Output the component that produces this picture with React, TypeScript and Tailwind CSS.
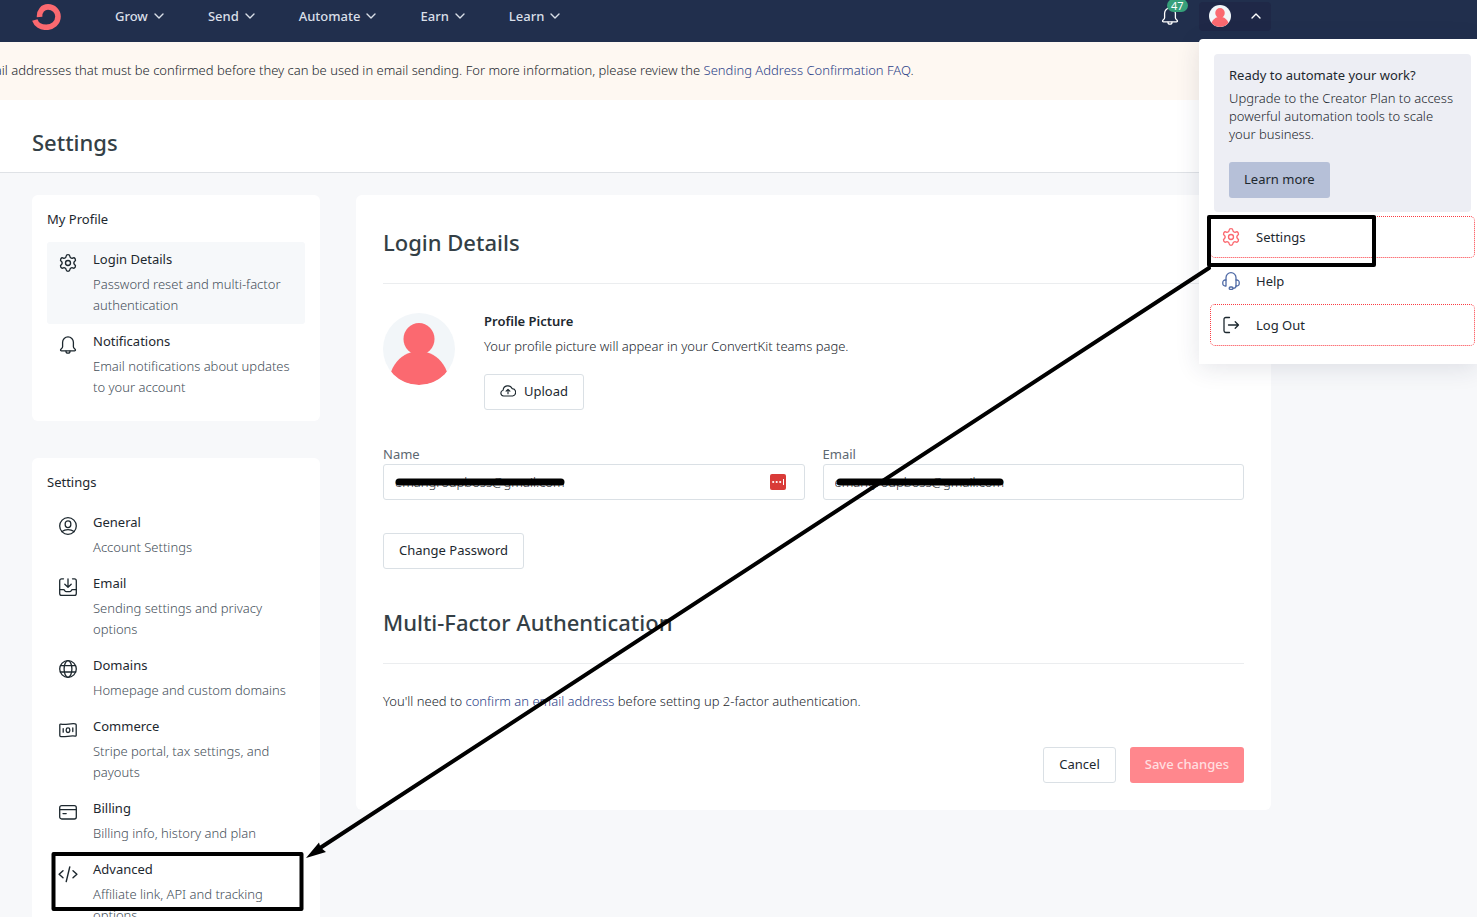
import { ReactNode } from "react";
import { Settings as GearIcon } from "lucide-react";

type MenuItem = {
  title: string;
  description: string;
  icon: ReactNode;
  active?: boolean;
};

const Icon = ({
  children,
  className = "h-[18px] w-[18px]",
}: {
  children: ReactNode;
  className?: string;
}) => (
  <svg
    viewBox="0 0 18 18"
    fill="none"
    stroke="currentColor"
    strokeWidth="1.3"
    strokeLinecap="round"
    strokeLinejoin="round"
    className={`shrink-0 ${className}`}
    aria-hidden="true"
  >
    {children}
  </svg>
);

const Gear = () => (
  <GearIcon className="-m-px h-5 w-5 shrink-0" strokeWidth={1.6} />
);

const BellIcon = () => (
  <Icon>
    <path d="M9 .9a5.4 5.4 0 0 1 5.4 5.4v4.4c0 1.9 2.1 2.1 2.1 3.3 0 .5-.4.8-.9.8H2.4c-.5 0-.9-.3-.9-.8 0-1.2 2.1-1.4 2.1-3.3V6.3A5.4 5.4 0 0 1 9 .9z" />
    <path d="M7 15.2a2 2 0 0 0 4 0" />
  </Icon>
);

const ChevronIcon = ({ up }: { up?: boolean }) => (
  <svg
    viewBox="0 0 10 6"
    fill="none"
    stroke="currentColor"
    strokeWidth="1.4"
    strokeLinecap="round"
    strokeLinejoin="round"
    className={`h-1.5 w-2.5 ${up ? "rotate-180" : ""}`}
    aria-hidden="true"
  >
    <path d="M1 1l4 4 4-4" />
  </svg>
);

const Avatar = ({ className }: { className: string }) => (
  <svg
    viewBox="0 0 72 72"
    className={`shrink-0 rounded-full bg-[#f2f6f9] ${className}`}
    role="img"
    aria-label="Profile picture"
  >
    <g fill="#fb6970">
      <ellipse cx="36" cy="26" rx="15.5" ry="16" />
      <path d="M8 59C12 48 19 42 29 39h14c10 3 17 9 21 20C57 68 47 72 36 72S15 68 8 59z" />
    </g>
  </svg>
);

const navLinks = ["Grow", "Send", "Automate", "Earn", "Learn"];

const profileItems: MenuItem[] = [
  {
    title: "Login Details",
    description: "Password reset and multi-factor authentication",
    icon: <Gear />,
    active: true,
  },
  {
    title: "Notifications",
    description: "Email notifications about updates to your account",
    icon: <BellIcon />,
  },
];

const settingsItems: MenuItem[] = [
  {
    title: "General",
    description: "Account Settings",
    icon: (
      <Icon>
        <circle cx="9" cy="9" r="8.3" />
        <rect x="6.2" y="3.8" width="5.6" height="6.8" rx="2.8" />
        <path d="M3 14.6c1.6-1.2 3.6-1.9 6-1.9s4.4.7 6 1.9" />
      </Icon>
    ),
  },
  {
    title: "Email",
    description: "Sending settings and privacy options",
    icon: (
      <Icon>
        <path d="M4.5.8H2.6A1.9 1.9 0 0 0 .7 2.7V15.4a1.9 1.9 0 0 0 1.9 1.9h12.8a1.9 1.9 0 0 0 1.9-1.9V2.7A1.9 1.9 0 0 0 15.4.8h-1.9" />
        <path d="M9 .8v8.4M5.8 6.2 9 9.3l3.2-3.1" />
        <path d="M.8 11.6h3.7c.8 0 1 .5 1.3 1.1.3.7.8 1 1.6 1h3.2c.8 0 1.3-.3 1.6-1 .3-.6.5-1.1 1.3-1.1h3.7" />
      </Icon>
    ),
  },
  {
    title: "Domains",
    description: "Homepage and custom domains",
    icon: (
      <Icon>
        <circle cx="9" cy="9" r="8.3" />
        <ellipse cx="9" cy="9" rx="3.9" ry="8.3" />
        <path d="M1.6 5.7h14.8M1.3 12h15.4" />
      </Icon>
    ),
  },
  {
    title: "Commerce",
    description: "Stripe portal, tax settings, and payouts",
    icon: (
      <Icon>
        <path d="M.8 4c0-.7.5-1 1.1-.9 4.8 1 9.4-.9 14.3-.3.6.1 1 .5 1 1.1v10.3c0 .6-.5 1-1.1.9-4.8-.8-9.4 1.1-14.2.5-.7-.1-1.1-.5-1.1-1.1z" />
        <rect x="7.2" y="6.9" width="3.6" height="4.6" rx="1.8" />
        <path d="M4.2 7.6v3.6M13.8 7v3.6" />
      </Icon>
    ),
  },
  {
    title: "Billing",
    description: "Billing info, history and plan",
    icon: (
      <Icon>
        <rect x=".7" y="2.7" width="16.6" height="13.3" rx="2" />
        <path d="M.8 6.6h16.4M4 10.6h3.2" />
      </Icon>
    ),
  },
  {
    title: "Advanced",
    description: "Affiliate link, API and tracking options",
    icon: (
      <Icon className="-mx-px h-5 w-5">
        <path d="M4.5 6 1 9.2l3.5 3.2M13.5 6 17 9.2l-3.5 3.2M10.6 2.6 7.4 15.8" />
      </Icon>
    ),
  },
];

const Header = () => (
  <header className="relative z-10 flex h-[42px] items-center bg-[#212f4d] pb-2.5 pl-8 text-[#d9dfe8]">
    <a href="#" aria-label="Home">
      <svg viewBox="0 0 29 28" fill="none" className="h-7 w-[29px]">
        <path
          d="M7.6 15C7.2 9 11 4.9 16 4.9c5.6 0 10 4.3 10 9.7 0 6.1-5.2 10.7-11.8 10.7-5.2 0-9.9-2.7-11.4-7.3"
          stroke="#fb6970"
          strokeWidth="5.6"
        />
      </svg>
    </a>
    <nav className="ml-[54px] flex gap-11">
      {navLinks.map((link) => (
        <button
          key={link}
          type="button"
          className="flex items-center gap-1.5 font-medium"
        >
          {link}
          <ChevronIcon />
        </button>
      ))}
    </nav>
    <button
      type="button"
      aria-label="Notifications"
      className="relative ml-auto mr-5 text-white"
    >
      <BellIcon />
      <span className="absolute -top-2 left-1.5 rounded-full bg-[#36a07a] px-1 text-[11px] font-normal leading-[13px]">
        47
      </span>
    </button>
    <div className="w-[278px]">
      <button
        type="button"
        aria-label="Account menu"
        aria-expanded="true"
        className="flex h-[29px] w-[72px] items-center justify-between rounded bg-[#1f2847] px-2.5 text-white"
      >
        <Avatar className="h-[22px] w-[22px]" />
        <ChevronIcon up />
      </button>
    </div>
    <AccountMenu />
  </header>
);

const AccountMenu = () => (
  <div className="absolute right-0 top-[39px] w-[278px] rounded-tl bg-white pb-[18px] pt-[15px] text-[#1d282f] shadow-[0_4px_24px_rgba(30,45,75,0.12)]">
    <section className="ml-[15px] mr-1.5 rounded-sm bg-[#edeef4] px-[15px] pb-3.5 pt-3">
      <h2 className="font-normal">Ready to automate your work?</h2>
      <p className="mt-[5px]">
        Upgrade to the Creator Plan to access powerful automation tools to scale
        your business.
      </p>
      <button
        type="button"
        className="mt-[19px] h-9 rounded-[3px] bg-[#b6c0d8] px-[15px] pb-0.5 font-normal"
      >
        Learn more
      </button>
    </section>
    <ul className="ml-[11px] mr-0.5 mt-1 flex flex-col gap-0.5 font-normal">
      <li>
        <a
          href="#"
          className="flex h-[42px] items-center gap-4 rounded-[5px] border border-dotted border-[#fb3b42] pl-[11px]"
        >
          <span className="text-[#fb6970]">
            <Gear />
          </span>
          Settings
        </a>
      </li>
      <li>
        <a href="#" className="flex h-[42px] items-center gap-4 pl-3">
          <span className="text-[#506ba6]">
            <Icon>
              <path d="M4 8v6h-.7A2.4 2.4 0 0 1 .8 11.7v-1.4A2.4 2.4 0 0 1 3.3 8zM14 8v6h.7a2.4 2.4 0 0 0 2.5-2.3v-1.4A2.4 2.4 0 0 0 14.7 8z" />
              <path d="M4 8V5.7a5 5 0 0 1 10 0V8M14 14c0 1.5-1 2.3-3 2.4" />
              <rect x="7.2" y="15" width="3.8" height="2.4" rx="1.2" />
            </Icon>
          </span>
          Help
        </a>
      </li>
      <li>
        <a
          href="#"
          className="flex h-[42px] items-center gap-4 rounded-[5px] border border-dotted border-[#fb3b42] pl-[11px]"
        >
          <Icon>
            <path d="M7.5 1.5H3.8A1.8 1.8 0 0 0 2 3.3v11.4a1.8 1.8 0 0 0 1.8 1.8h3.7M6.5 9h10M13.2 5.7 16.5 9l-3.3 3.3" />
          </Icon>
          Log Out
        </a>
      </li>
    </ul>
  </div>
);

const SidebarCard = ({
  title,
  items,
}: {
  title: string;
  items: MenuItem[];
}) => (
  <section className="rounded-md bg-white p-[15px]">
    <h2 className="font-normal">{title}</h2>
    <ul className="mt-3.5">
      {items.map((item) => (
        <li key={item.title}>
          <a
            href="#"
            className={`flex gap-4 rounded-[3px] px-3 py-2 ${
              item.active ? "bg-[#f6f8fa]" : ""
            }`}
          >
            <span className="mt-1 flex w-[18px] shrink-0 justify-center self-start">
              {item.icon}
            </span>
            <div>
              <h3 className="font-normal">{item.title}</h3>
              <p className="mt-1.5 leading-[21px] text-[#46505a]">
                {item.description}
              </p>
            </div>
          </a>
        </li>
      ))}
    </ul>
  </section>
);

const OutlineButton = ({ children }: { children: ReactNode }) => (
  <button
    type="button"
    className="flex h-9 items-center gap-2 rounded-[3px] border border-[#dae0e5] bg-white px-[15px] pb-0.5 font-normal"
  >
    {children}
  </button>
);

const SectionTitle = ({ children }: { children: ReactNode }) => (
  <h2 className="border-b border-[#ebedef] pb-[26px] text-[22px] font-medium leading-[30px] text-[#343f46]">
    {children}
  </h2>
);

const TextField = ({
  id,
  label,
  children,
}: {
  id: string;
  label: string;
  children?: ReactNode;
}) => (
  <div className="flex-1">
    <label htmlFor={id} className="block font-normal leading-5 text-[#5d6871]">
      {label}
    </label>
    <div className="relative">
      <input
        id={id}
        type="text"
        defaultValue="emangroupboss@gmail.com"
        className="h-9 w-full rounded-[3px] border border-[#dae0e5] px-[11px]"
      />
      {children}
    </div>
  </div>
);

const LoginDetails = () => (
  <main className="flex-1 self-start rounded-md bg-white px-[27px] pb-[27px] pt-8">
    <SectionTitle>Login Details</SectionTitle>
    <div className="mt-[29px] flex gap-[29px]">
      <Avatar className="h-[72px] w-[72px]" />
      <div>
        <h3 className="font-semibold leading-4">Profile Picture</h3>
        <p className="mb-[19px] mt-2">
          Your profile picture will appear in your ConvertKit teams page.
        </p>
        <OutlineButton>
          <Icon className="h-4 w-4">
            <path d="M5.5 14.6H4a3.3 3.3 0 0 1-.5-6.5A5.3 5.3 0 0 1 13.6 6.3a4.2 4.2 0 0 1 .7 8.3H5M9 12V7.3M6.9 9.2 9 7.2l2.1 2" />
          </Icon>
          Upload
        </OutlineButton>
      </div>
    </div>
    <div className="mb-[33px] mt-[34px] flex gap-[18px]">
      <TextField id="name" label="Name">
        <svg
          viewBox="0 0 16 16"
          className="absolute right-[19px] top-2.5 h-4 w-4"
          aria-hidden="true"
        >
          <rect width="16" height="16" rx="2" fill="#d93b38" />
          <g fill="#fff">
            <circle cx="3.2" cy="8" r="1.1" />
            <circle cx="6.7" cy="8" r="1.1" />
            <circle cx="10.2" cy="8" r="1.1" />
            <rect x="13" y="5" width="1" height="6" />
          </g>
        </svg>
      </TextField>
      <TextField id="email" label="Email" />
    </div>
    <OutlineButton>Change Password</OutlineButton>
    <div className="mt-[38px]">
      <SectionTitle>Multi-Factor Authentication</SectionTitle>
    </div>
    <p className="mt-7">
      You'll need to{" "}
      <a href="#" className="text-[#2c4388]">
        confirm an email address
      </a>{" "}
      before setting up 2-factor authentication.
    </p>
    <div className="mt-[37px] flex justify-end gap-3.5">
      <OutlineButton>Cancel</OutlineButton>
      <button
        type="submit"
        className="h-9 rounded-[3px] bg-[#ff878d] px-[15px] pb-0.5 font-medium text-[#ffdfe0]"
      >
        Save changes
      </button>
    </div>
  </main>
);

// Marker boxes, arrow and strike-outs drawn over the page
const Annotations = () => (
  <svg
    viewBox="0 0 1477 917"
    className="pointer-events-none absolute left-0 top-0 z-20 h-[917px] w-[1477px] max-w-none"
    fill="none"
    stroke="#000"
    strokeWidth="4"
    strokeLinejoin="round"
    strokeLinecap="round"
    aria-hidden="true"
  >
    <rect x="1209" y="217" width="165" height="48" />
    <rect x="53.5" y="854" width="248" height="55" />
    <path d="M1209 268 320 848" />
    <path d="M306 858 319 842.5 320.5 847.5 326 852z" fill="#000" stroke="none" />
    <path d="M399 482H561M840 482H1000" strokeWidth="7" />
  </svg>
);

const App = () => {
  return (
    <div className="relative min-h-screen overflow-hidden bg-[#f7f8fa] font-['Noto_Sans',sans-serif] text-[13px] font-light leading-[18px] text-[#1d282f]">
      <Header />
      <div className="bg-[#fef8f2] pb-[21px] pt-[19px]">
        <p className="-ml-6 whitespace-nowrap">
          email addresses that must be confirmed before they can be used in
          email sending. For more information, please review the{" "}
          <a href="#" className="text-[#2c4388]">
            Sending Address Confirmation FAQ
          </a>
          .
        </p>
      </div>
      <div className="border-b border-[#dfe2e6] bg-white px-8 pb-[15px] pt-[27px]">
        <h1 className="text-[22px] font-medium leading-[30px] text-[#343f46]">
          Settings
        </h1>
      </div>
      <div className="flex max-w-[1303px] gap-9 px-8 pt-[22px]">
        <aside className="flex w-72 shrink-0 flex-col gap-[37px]">
          <SidebarCard title="My Profile" items={profileItems} />
          <SidebarCard title="Settings" items={settingsItems} />
        </aside>
        <LoginDetails />
      </div>
      <Annotations />
    </div>
  );
};

export default App;
